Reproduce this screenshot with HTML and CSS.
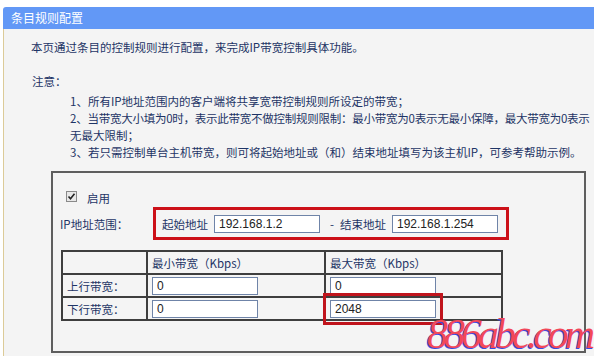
FILE: index.html
```html
<!DOCTYPE html>
<html lang="zh-CN">
<head>
  <meta charset="UTF-8" />
  <title>条目规则配置</title>
  <link rel="stylesheet" href="styles.css">
</head>
<body>
  <div class="panel">
    <div class="panel-title">条目规则配置</div>
    <div class="panel-body">
      <p class="intro">本页通过条目的控制规则进行配置，来完成IP带宽控制具体功能。</p>
      <p class="note-title">注意：</p>
      <div class="notes">
        <p>1、所有IP地址范围内的客户端将共享宽带控制规则所设定的带宽；</p>
        <p class="tight">2、当带宽大小填为0时，表示此带宽不做控制规则限制：最小带宽为0表示无最小保障，最大带宽为0表示</p>
        <p>无最大限制；</p>
        <p>3、若只需控制单台主机带宽，则可将起始地址或（和）结束地址填写为该主机IP，可参考帮助示例。</p>
      </div>

      <div class="rule-box">
        <div class="enable-row">
          <svg class="check" width="11" height="11" viewBox="0 0 11 11">
            <rect x="0.5" y="0.5" width="10" height="10" fill="#e8e8e8" stroke="#8a8a8a"/>
            <path d="M2.5 5.5 L4.5 7.8 L8.5 2.8" fill="none" stroke="#222" stroke-width="1.6"/>
          </svg>
          <span>启用</span>
        </div>
        <div class="ip-row">
          <span class="ip-label">IP地址范围：</span>
          <div class="ip-range">
            <span>起始地址</span>
            <input class="field" type="text" value="192.168.1.2">
            <span class="dash">-</span>
            <span>结束地址</span>
            <input class="field" type="text" value="192.168.1.254">
          </div>
        </div>
        <table class="bw-table">
          <tr>
            <td class="col-name"></td>
            <td class="col-min">最小带宽（Kbps）</td>
            <td class="col-max">最大带宽（Kbps）</td>
          </tr>
          <tr>
            <td>上行带宽：</td>
            <td><input class="field" type="text" value="0"></td>
            <td><input class="field" type="text" value="0"></td>
          </tr>
          <tr>
            <td>下行带宽：</td>
            <td><input class="field" type="text" value="0"></td>
            <td><input class="field marked" type="text" value="2048"></td>
          </tr>
        </table>
      </div>

      <div class="watermark">886abc.com</div>
    </div>
  </div>
</body>
</html>
```

FILE: styles.css
```css
body {
  margin: 0;
  background: #ffffff;
  font-family: "Noto Sans CJK SC", "DejaVu Sans", sans-serif;
  font-size: 11.5px;
  color: #1e3466;
  overflow: hidden;
}
p {
  margin: 0;
}
.panel {
  margin: 7px 0 0 3px;
}
.panel-title {
  height: 22px;
  line-height: 22px;
  padding-left: 8px;
  background: #6298f6;
  color: #ffffff;
  font-size: 12px;
  border-top-left-radius: 3px;
}
.panel-body {
  position: relative;
  background: #f4f4f4;
  border-left: 1px solid #dccb98;
  padding: 10px 0 3px 0;
}
.intro {
  line-height: 17px;
  padding-left: 27px;
}
.note-title {
  line-height: 17px;
  margin-top: 17px;
  padding-left: 28px;
}
.notes {
  margin-top: 3px;
  padding-left: 66px;
  white-space: nowrap;
  overflow: hidden;
}
.notes p {
  line-height: 17px;
}
.notes .tight {
  letter-spacing: -0.25px;
}
.rule-box {
  margin: 10px 0 0 47px;
  width: 531px;
  height: 178px;
  border: 2px solid #5e5e5e;
}
.enable-row {
  display: flex;
  align-items: center;
  height: 18px;
  margin-top: 16px;
  padding-left: 13px;
}
.check {
  margin-right: 10px;
  margin-top: -3px;
}
.ip-row {
  display: flex;
  align-items: center;
  height: 33px;
  padding-left: 7px;
}
.ip-label {
  width: 93px;
}
.ip-range {
  display: flex;
  align-items: center;
  gap: 6px;
  height: 27px;
  border: 3px solid #cc1018;
  padding: 0 8px 0 6px;
}
.dash {
  margin-left: 4px;
}
.field {
  width: 106px;
  height: 18px;
  box-sizing: border-box;
  border: 1px solid #6f84a8;
  background: #ffffff;
  padding: 0 4px;
  font-family: "Liberation Sans", Arial, sans-serif;
  font-size: 12px;
  color: #222222;
}
.marked {
  outline: 3px solid #c0141c;
  outline-offset: 4px;
}
.bw-table {
  margin: 10px 0 0 8px;
  border-collapse: collapse;
  border: 2px solid #3e3e3e;
}
.bw-table td {
  border: 2px solid #3e3e3e;
  height: 21px;
  padding: 0 0 0 4px;
}
.col-name {
  width: 79px;
}
.col-min {
  width: 172px;
}
.col-max {
  width: 171px;
}
.watermark {
  position: absolute;
  left: 423px;
  bottom: 2px;
  line-height: 0.9;
  font-family: "Liberation Serif", serif;
  font-style: italic;
  font-size: 42px;
  letter-spacing: -4px;
  color: #f2485a;
  text-shadow: -1px 1px 0 #3a48e0;
}
```
